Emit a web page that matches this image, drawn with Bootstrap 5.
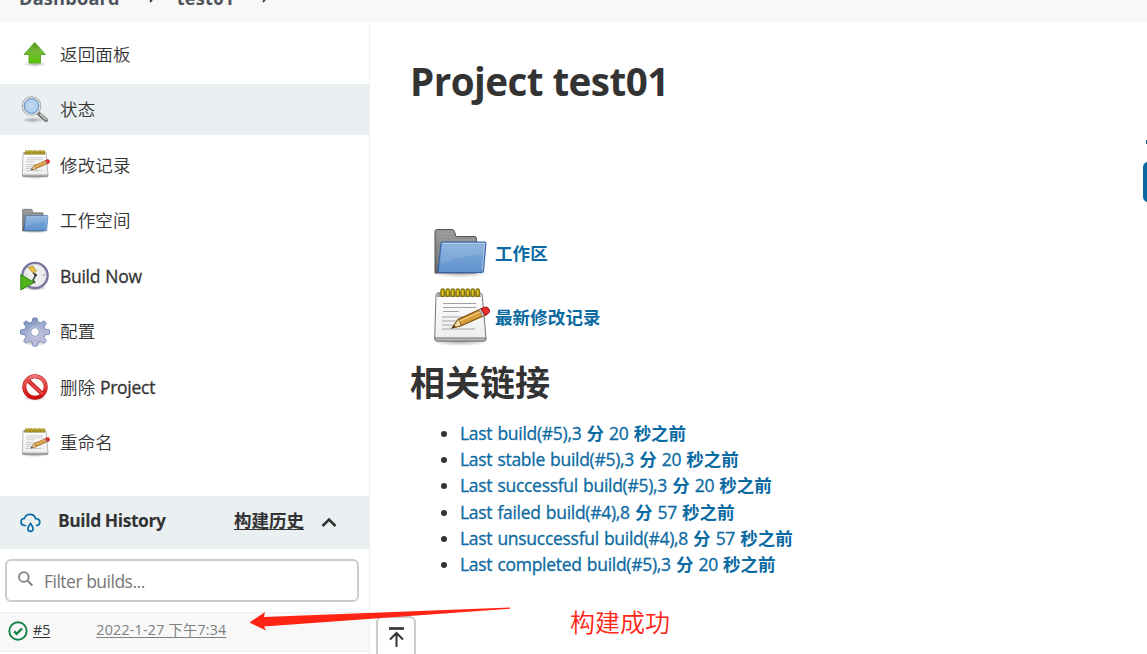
<!DOCTYPE html>
<html lang="zh-CN">
<head>
<meta charset="utf-8">
<meta name="viewport" content="width=device-width, initial-scale=1">
<title>test01 [Jenkins]</title>
<link href="https://cdn.jsdelivr.net/npm/bootstrap@5.3.0/dist/css/bootstrap.min.css" rel="stylesheet">
<style>
  body{font-family:"Open Sans","Noto Sans CJK SC",sans-serif;font-size:17.5px;line-height:26.25px;color:#333;background:#fff;height:654px;overflow:hidden}
  .crumbs{height:22px;background:#f8f8f8;color:#4d545d;font-weight:700;font-size:18.2px;padding-left:19px;letter-spacing:.2px}
  .crumbs-line{height:26px;margin-top:-15px}
  .crumbs svg{display:block}
  .side{width:370px;height:632px;border-right:1px solid #eaeff2;padding-top:6.5px}
  .task{height:51px;margin-bottom:4.5px;padding-left:20px;color:#333;text-decoration:none;white-space:nowrap}
  .task svg{width:30px;height:30px;margin-right:10px;flex:none}
  .task-name{font-weight:350;letter-spacing:.15px}
  .task.current{background:#eaeff2}
  .latin{font-weight:500;letter-spacing:-.28px;word-spacing:.8px;-webkit-text-stroke:.3px currentColor}
  .history-head{height:53px;background:#eaeff2;margin-top:28px;padding:0 32px 4px 20px}
  .history-title{font-weight:700;margin-left:17px;letter-spacing:-.45px}
  .history-link{font-weight:600;color:#333;text-underline-offset:2px}
  .filter-box{height:43px;margin:10px 10px 0 5px;border:2px solid #ccc;border-radius:6px;padding-left:10px;color:#757575}
  .filter-box input{border:0;outline:0;padding:2px 0 0;background:none;font-size:17.5px;width:300px;letter-spacing:-.5px}
  .filter-box input::placeholder{color:#777}
  .build-row{height:40px;margin-top:10px;background:#f8f8f8;border-top:1px solid #eaeff2;border-bottom:1px solid #eaeff2;padding-left:8px;font-size:14.2px;padding-bottom:4px}
  .build-row a{color:#333;text-underline-offset:2px}
  .build-row .when{color:#808080;margin-left:46px;white-space:nowrap;letter-spacing:.26px}
  .main-area{padding:31px 0 0 40px}
  h1{font-size:38.6px;line-height:56px;font-weight:700;margin:0;letter-spacing:-.55px}
  .jump-list{margin:112px 0 0 20px}
  .jump-list a,.permalinks a{color:#0b6aa2;text-decoration:none;font-weight:700}
  .jump-list a{height:64px;letter-spacing:.1px}
  .jump-list a:last-child{height:65px}
  .jump-list svg{width:60px;height:60px;margin-right:5px}
  .jump-list a:first-child svg{margin-top:-1px}
  .jump-list a:last-child svg{margin-top:1px}
  h2{font-size:35px;line-height:50px;font-weight:700;margin:8px 0 12px 0}
  .permalinks{padding-left:50px;margin:0}
  .permalinks li{height:26.2px;line-height:26.2px;white-space:nowrap}
  .go-top{position:absolute;left:376px;top:616px;width:40px;height:48px;border:2px solid #ccc;border-radius:6px;background:#fff}
  .note-arrow{position:absolute;left:245px;top:600px;z-index:3}
  .note-text{position:absolute;left:570px;top:603px;font-size:25px;line-height:38px;font-weight:350;color:#ff2414}
  .edge-link{position:absolute;right:0;top:140px;width:1px;height:4px;background:#0b6aa2}
  .edge-button{position:absolute;right:-36px;top:162px;width:40px;height:40px;border-radius:5px;background:#0b6aa2}
</style>
</head>
<body class="position-relative">
<svg width="0" height="0" class="position-absolute">
  <defs>
    <linearGradient id="gGreen" x2="0" y2="1"><stop stop-color="#4c9a1c"/><stop offset=".45" stop-color="#78b93c"/><stop offset="1" stop-color="#52c800"/></linearGradient>
    <linearGradient id="gBlue" x2="0" y2="1"><stop stop-color="#86afdd"/><stop offset="1" stop-color="#5f92cd"/></linearGradient>
    <linearGradient id="gGrey" x2="0" y2="1"><stop stop-color="#999"/><stop offset="1" stop-color="#666"/></linearGradient>
    <linearGradient id="gPaper" x2="0" y2="1"><stop stop-color="#fff"/><stop offset="1" stop-color="#ececec"/></linearGradient>
    <linearGradient id="gGear" x2=".5" y2="1"><stop stop-color="#6680ae"/><stop offset=".5" stop-color="#a3b1d3"/><stop offset="1" stop-color="#c9bfdc"/></linearGradient>
    <linearGradient id="gRed" x2="0" y2="1"><stop stop-color="#ed7474"/><stop offset="1" stop-color="#cc0a0a"/></linearGradient>
    <radialGradient id="gLens"><stop stop-color="#c5dcf3"/><stop offset="1" stop-color="#a5c6e9"/></radialGradient>
    <radialGradient id="gShade"><stop stop-color="#000" stop-opacity=".3"/><stop offset="1" stop-color="#000" stop-opacity="0"/></radialGradient>
    <symbol id="folder" viewBox="0 0 60 60">
      <ellipse cx="30" cy="50" rx="29" ry="5" fill="url(#gShade)"/>
      <path d="M5 50V8.500q0-2 2-2h15q2 0 2.500 2l1.500 5h18.500q2 0 2 2v34.500z" fill="url(#gGrey)" stroke="#555"/>
      <path d="M7 11h16M7 14h17M7 17h38M7 20h4M7 23h4M7 26h4M7 29h3M7 32h3M7 35h3M7 38h3M7 41h3" stroke="#b8b8b8" stroke-width=".8" opacity=".6"/>
      <path d="M11 20.500q0-1.500 1.500-1.500H54.500q1.500 0 1.300 1.500L53.500 47.500q-.2 2-2 2H9.500q-1.500 0-1.300-2z" fill="url(#gBlue)" stroke="#3465a4" stroke-width="1.200"/>
      <path d="M12.500 20.500h42l-2.200 27.500" fill="none" stroke="#fff" opacity=".45"/>
      <path d="M12 22H53.500l-.8 9.500Q27 33 10.500 41z" fill="#fff" opacity=".1"/>
    </symbol>
    <symbol id="notepad" viewBox="0 0 60 60">
      <ellipse cx="30" cy="54" rx="28" ry="4" fill="url(#gShade)"/>
      <path d="M8 5h42q2 0 2.200 2L56 50q.2 3-2 3H7q-2.500 0-2.300-3L6 7q.2-2 2-2z" fill="url(#gPaper)" stroke="#777"/>
      <path d="M5 50h51v1q0 2-2 2H7q-2 0-2-2z" fill="#bbb" stroke="#777"/>
      <path d="M8 4h42l1 5H7z" fill="#999"/>
      <path d="M13 15.500h33M13 19.500h33M13 23.500h16M12 29h32M12 33h29M12 37h21M12 41h33" stroke="#a2a2a2"/>
      <g fill="#d8c32c" stroke="#857200" stroke-width="1.300"><rect x="11" y="1" width="3.400" height="7.500" rx="1.700"/><rect x="16" y="1" width="3.400" height="7.500" rx="1.700"/><rect x="21" y="1" width="3.400" height="7.500" rx="1.700"/><rect x="26" y="1" width="3.400" height="7.500" rx="1.700"/><rect x="31" y="1" width="3.400" height="7.500" rx="1.700"/><rect x="36" y="1" width="3.400" height="7.500" rx="1.700"/><rect x="41" y="1" width="3.400" height="7.500" rx="1.700"/><rect x="46" y="1" width="3.400" height="7.500" rx="1.700"/></g>
      <path d="M22 40l6-8.500 24-11 3.500 6.500-25 11z" fill="#d99c3a" stroke="#7a4a0a" stroke-width="1.100"/>
      <path d="M29 33.500l23-10.500" stroke="#f2cf88" stroke-width="1.300"/>
      <path d="M22 40l6-8.500q2.500.5 3 6.500z" fill="#f2d9a9" stroke="#7a4a0a" stroke-width=".8"/><path d="M22 40l2.500-3 1 2z" fill="#222"/>
      <path d="M49 22l2.500-1.200 3.300 6.500-2.200 1z" fill="#ccc" stroke="#777" stroke-width=".7"/>
      <path d="M51 20.800q4-2.500 6-1.500 3 1.500 2.500 4.500-.6 2-4.500 3.700z" fill="#e83030" stroke="#a40000" stroke-width=".9"/>
    </symbol>
  </defs>
</svg>

<header class="crumbs overflow-hidden">
  <div class="crumbs-line d-flex align-items-center">
    <span>Dashboard</span>
    <svg width="10" height="12" viewBox="0 0 10 12" style="margin:0 20px 2px 27px"><path d="M3 1l4 5-4 5" fill="none" stroke="#333" stroke-width="1.800"/></svg>
    <span>test01</span>
    <svg width="10" height="12" viewBox="0 0 10 12" style="margin:0 0 2px 26px"><path d="M3 1l4 5-4 5" fill="none" stroke="#333" stroke-width="1.800"/></svg>
  </div>
</header>

<div class="d-flex">
  <aside class="side flex-shrink-0">
    <nav>
      <a class="task d-flex align-items-center" href="#">
        <svg viewBox="0 0 30 30"><ellipse cx="15" cy="25" rx="12" ry="3" fill="url(#gShade)"/><path d="M14.700 3.500L25.500 15.500h-5v8.500H9v-8.500H4z" fill="url(#gGreen)" stroke="#58a51e" stroke-width=".9" stroke-linejoin="round"/></svg>
        <span class="task-name">返回面板</span></a>
      <a class="task current d-flex align-items-center" href="#">
        <svg viewBox="0 0 30 30"><ellipse cx="13" cy="25" rx="12" ry="3" fill="url(#gShade)"/><path d="M19 19l7 6" stroke="#777" stroke-width="4.200" stroke-linecap="round"/><path d="M20.500 19.500l5.500 5" stroke="#ccc" stroke-width="1.600" stroke-linecap="round"/><circle cx="11.500" cy="11" r="8.800" fill="url(#gLens)" stroke="#9a9a9a" stroke-width="2"/><circle cx="11.500" cy="11" r="8.400" fill="none" stroke="#eee" stroke-width="1.300"/><circle cx="11.500" cy="11" r="7.400" fill="none" stroke="#5b86bd" stroke-width=".9"/></svg>
        <span class="task-name">状态</span></a>
      <a class="task d-flex align-items-center" href="#"><svg><use href="#notepad"/></svg><span class="task-name">修改记录</span></a>
      <a class="task d-flex align-items-center" href="#"><svg><use href="#folder"/></svg><span class="task-name">工作空间</span></a>
      <a class="task d-flex align-items-center" href="#">
        <svg viewBox="0 0 30 30"><ellipse cx="15" cy="27" rx="13" ry="3" fill="url(#gShade)"/><circle cx="15" cy="14.500" r="12.600" fill="#eeeeec" stroke="#77739b" stroke-width="2.400"/><circle cx="15" cy="14.500" r="11.200" fill="none" stroke="#c9c8d8" stroke-width=".7"/><path d="M8 6.500l5-1.500 3.500 5-3 2.500z" fill="#e6bd45" stroke="#a98420" stroke-width=".6"/><path d="M13 12l3 2-3 5 2 3" fill="none" stroke="#444" stroke-width="1.500"/><circle cx="15.500" cy="14" r="1.300" fill="#333"/><path d="M23 14h2M6 14h1" stroke="#888"/><path d="M.8 13.500L14 21.500.8 29z" fill="#4db51a" stroke="#2f850c" stroke-width="1"/></svg>
        <span class="latin">Build Now</span></a>
      <a class="task d-flex align-items-center" href="#">
        <svg viewBox="0 0 30 30"><ellipse cx="15" cy="26" rx="12" ry="3" fill="url(#gShade)"/><path fill-rule="evenodd" d="M13 1h4l1 4 2.500 1 3.600-2.200 2.300 2.300L24.200 9.700l1 2.500 4.300.8v4l-4.300.9-1 2.500 2.200 3.500-2.300 2.400-3.600-2.200-2.500 1-1 4h-4l-1-4-2.500-1-3.600 2.200-2.300-2.400 2.200-3.500-1-2.500L.5 17v-4l4.300-.8 1-2.500-2.200-3.600 2.300-2.300L9.500 6l2.500-1zM15 10.700a4.300 4.300 0 100 8.600 4.300 4.300 0 000-8.600z" fill="url(#gGear)" stroke="#7186b0" stroke-width=".9" stroke-linejoin="round"/><circle cx="15" cy="15" r="5.300" fill="none" stroke="#d4daf0" opacity=".7"/></svg>
        <span class="task-name">配置</span></a>
      <a class="task d-flex align-items-center" href="#">
        <svg viewBox="0 0 30 30"><ellipse cx="15" cy="26" rx="12" ry="3" fill="url(#gShade)"/><g fill="none"><path d="M7 7.500l16 15" stroke="#b80000" stroke-width="4.200"/><circle cx="15" cy="15" r="10.700" stroke="#c61010" stroke-width="4"/><circle cx="15" cy="15" r="10.700" stroke="url(#gRed)" stroke-width="2.900"/><path d="M7 7.500l16 15" stroke="#e34343" stroke-width="2.800"/></g></svg>
        <span class="task-name">删除 <span class="latin">Project</span></span></a>
      <a class="task d-flex align-items-center" href="#"><svg><use href="#notepad"/></svg><span class="task-name">重命名</span></a>
    </nav>

    <section>
      <div class="history-head d-flex align-items-center">
        <svg class="mt-1" width="21" height="20" viewBox="0 0 21 20" fill="none" stroke="#0b6aa2" stroke-width="1.700" stroke-linecap="round"><path d="M5.500 12.500H5C2.500 12.500 1 11 1 9s1.500-3.400 3.500-3.600C5.200 2.800 7.300 1.300 10 1.300c3 0 5 1.800 5.600 4.300 2.500.2 4.200 1.600 4.200 3.600 0 1.800-1.300 3-3.300 3.300"/><path d="M10.500 10.500c-1.300 2-2.600 3.500-2.600 5.300a2.600 2.600 0 005.200 0c0-1.800-1.300-3.300-2.600-5.300z"/></svg>
        <span class="history-title">Build History</span>
        <a class="history-link ms-auto" href="#">构建历史</a>
        <svg class="mt-1" style="margin-left:17px" width="16" height="11" viewBox="0 0 16 11"><path d="M1.500 9L8 2.500l6.500 6.500" fill="none" stroke="#333" stroke-width="2.600"/></svg>
      </div>
      <div class="filter-box d-flex align-items-center">
        <svg width="17" height="17" viewBox="0 0 17 17" class="mb-1 flex-shrink-0" style="margin-right:10px"><g fill="none" stroke="#808080" stroke-width="1.800"><circle cx="6.800" cy="7" r="4.800"/><path d="M10.300 10.500l5 5"/></g></svg>
        <input type="text" placeholder="Filter builds...">
      </div>
      <div class="build-row d-flex align-items-center">
        <svg style="margin-top:2px" width="20" height="20" viewBox="0 0 20 20" fill="none" stroke="#138347"><circle cx="10" cy="10" r="8.700" stroke-width="1.900"/><path d="M6.200 10.300l2.500 2.500L14 7.500" stroke-width="2.400"/></svg>
        <a href="#" style="margin-left:5px">#5</a>
        <a class="when" href="#">2022-1-27 下午7:34</a>
      </div>
    </section>
  </aside>

  <main class="main-area flex-grow-1">
    <h1>Project test01</h1>
    <div class="jump-list">
      <a class="d-flex align-items-center" href="#"><svg><use href="#folder"/></svg>工作区</a>
      <a class="d-flex align-items-center" href="#"><svg><use href="#notepad"/></svg>最新修改记录</a>
    </div>
    <h2>相关链接</h2>
    <ul class="permalinks">
      <li><a href="#"><span class="latin">Last build(#5),3 </span>分<span class="latin"> 20 </span>秒之前</a></li>
      <li><a href="#"><span class="latin">Last stable build(#5),3 </span>分<span class="latin"> 20 </span>秒之前</a></li>
      <li><a href="#"><span class="latin">Last successful build(#5),3 </span>分<span class="latin"> 20 </span>秒之前</a></li>
      <li><a href="#"><span class="latin">Last failed build(#4),8 </span>分<span class="latin"> 57 </span>秒之前</a></li>
      <li><a href="#"><span class="latin">Last unsuccessful build(#4),8 </span>分<span class="latin"> 57 </span>秒之前</a></li>
      <li><a href="#"><span class="latin">Last completed build(#5),3 </span>分<span class="latin"> 20 </span>秒之前</a></li>
    </ul>
  </main>
</div>

<div class="edge-link"></div>
<div class="edge-button"></div>
<a class="go-top" href="#" aria-label="Top"><svg class="d-block" width="36" height="34" viewBox="0 0 36 34" fill="none" stroke="#333"><path d="M11 10.500h15" stroke-width="2.600"/><path d="M18.500 29V15M12 21.500l6.500-6.500 6.500 6.500" stroke-width="2"/></svg></a>
<svg class="note-arrow" width="270" height="50" viewBox="0 0 270 50"><path d="M4.500 22.500L20 12l-1 5 246-9.500v1.300L19 26.500l2 4z" fill="#ff2414"/></svg>
<div class="note-text">构建成功</div>
<script src="https://cdn.jsdelivr.net/npm/bootstrap@5.3.0/dist/js/bootstrap.bundle.min.js"></script>
</body>
</html>
